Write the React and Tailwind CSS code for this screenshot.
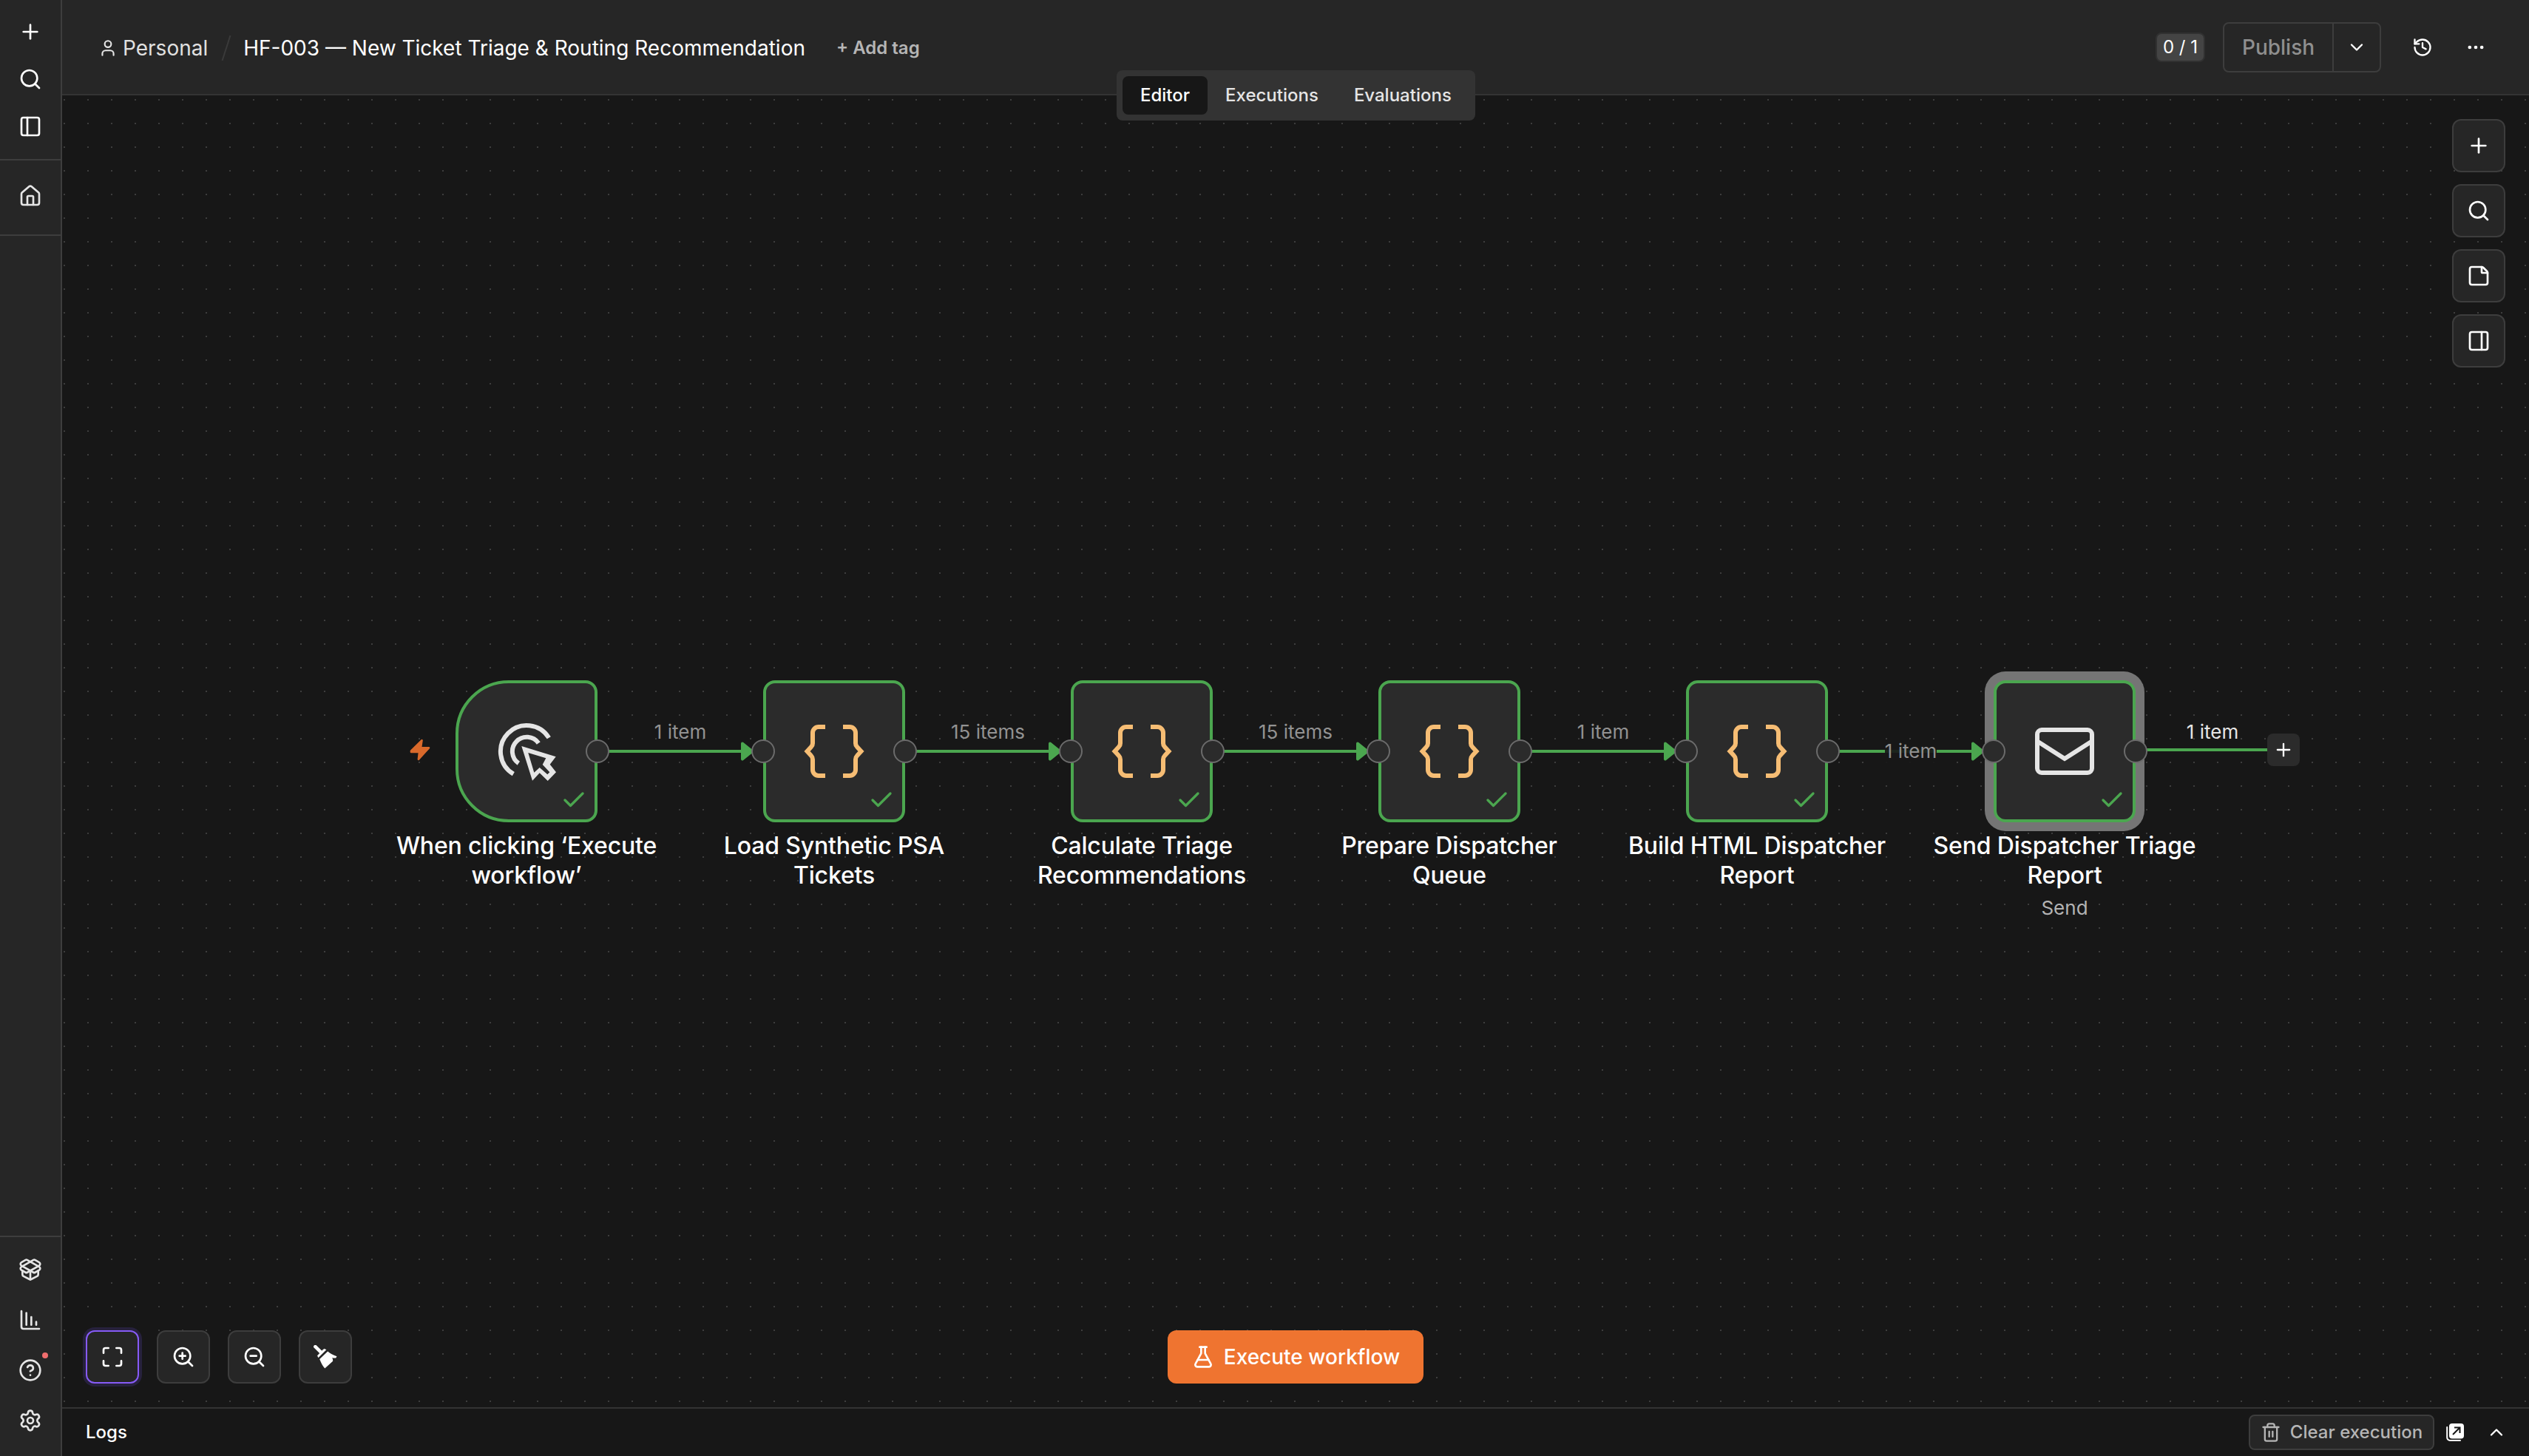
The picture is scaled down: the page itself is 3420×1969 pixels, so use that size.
import {
  ChartColumnDecreasing,
  Check,
  ChevronDown,
  ChevronUp,
  CircleQuestionMark,
  Ellipsis,
  FlaskConical,
  History,
  House,
  Maximize,
  PackageOpen,
  PanelLeft,
  PanelRight,
  Plus,
  Search,
  Settings,
  StickyNote,
  Trash2,
  User,
  ZoomIn,
  ZoomOut,
} from 'lucide-react'

const NODE_SIZE = 192
const NODE_PITCH = 416
const FIRST_X = 532
const NODE_Y = 791

const NODES = [
  { title: ['When clicking ‘Execute', 'workflow’'], icon: 'trigger' },
  { title: ['Load Synthetic PSA', 'Tickets'], icon: 'code' },
  { title: ['Calculate Triage', 'Recommendations'], icon: 'code' },
  { title: ['Prepare Dispatcher', 'Queue'], icon: 'code' },
  { title: ['Build HTML Dispatcher', 'Report'], icon: 'code' },
  { title: ['Send Dispatcher Triage', 'Report'], icon: 'mail', subtitle: 'Send', selected: true },
]

const EDGES = [
  { label: '1 item' },
  { label: '15 items' },
  { label: '15 items' },
  { label: '1 item' },
  { label: '1 item', inline: true },
]

function BroomIcon() {
  return (
    <svg width="32" height="32" viewBox="0 0 32 32" fill="currentColor">
      <path d="M2.4 2.2 9.5 9.2" stroke="currentColor" strokeWidth="4.6" strokeLinecap="round" />
      <path d="M5.6 14.2 13.4 6a1.5 1.5 0 0 1 2-.2l1.4.6L6.6 16.6z" stroke="currentColor" strokeLinejoin="round" />
      <path d="M8.2 19 19.2 8.6c3.2 2.6 7 5.2 12.3 6.6l-1.3 2.2c-2 .5-3.6 0-5-.5.8 1.8 1.2 3.4.9 4.8L15.3 31.5C12.5 28.3 10 24 8.2 19z" />
    </svg>
  )
}

function PopOutIcon() {
  return (
    <svg width="24" height="24" viewBox="0 0 24 24" fill="none">
      <path d="M1.2 5v14a4 4 0 0 0 4 4H19" stroke="white" strokeWidth="2" strokeLinecap="round" />
      <rect x="4" width="20" height="20.5" rx="4" fill="white" />
      <path d="M9 15 18 6M11 5.5h7.5V13" stroke="#171717" strokeWidth="2" />
    </svg>
  )
}

function BoltIcon() {
  return (
    <svg width="30" height="32" viewBox="0 0 30 32" fill="#d9692b" stroke="#d9692b" strokeWidth="2.6" strokeLinejoin="round">
      <path d="M17.5 3.2 16 13.3h11L12.9 28.8 14 19H3v-1.5z" />
    </svg>
  )
}

function TriggerIcon() {
  return (
    <svg className="overflow-visible" width="80" height="80" viewBox="0 0 80 80" fill="none">
      <path d="M70.3 21.8A35.3 35.3 0 1 0 22.3 70.7" stroke="#e5e5e5" strokeWidth="6" />
      <path d="M56.3 29A19.5 19.5 0 1 0 29.3 56.3" stroke="#e5e5e5" strokeWidth="6" />
      <path
        d="M33.3 33 79.7 47.3 71.7 57.7 80 68.3 68.7 80 57.7 69.3 48 79.7ZM42.3 42 50.3 68.7 57.7 62 68.3 71.3 71.3 68.3 61.7 58 66.3 49.3Z"
        fill="#e5e5e5"
        fillRule="evenodd"
      />
    </svg>
  )
}

function CodeIcon() {
  return (
    <svg className="overflow-visible" width="80" height="80" viewBox="0 0 80 80" fill="none" stroke="#f6bd74" strokeWidth="6">
      <path d="M28 7H19a8 8 0 0 0-8 8V29a7 7 0 0 1-2 5L3.5 40 9 46a7 7 0 0 1 2 5V65a8 8 0 0 0 8 8h9" />
      <path d="M52 7H61a8 8 0 0 1 8 8V29a7 7 0 0 0 2 5L76.5 40 71 46a7 7 0 0 0-2 5V65a8 8 0 0 1-8 8h-9" />
    </svg>
  )
}

function MailIcon() {
  return (
    <svg width="80" height="80" viewBox="0 0 80 80" fill="none" stroke="#e5e5e5" strokeWidth="6">
      <rect x="3" y="11" width="74" height="58" rx="6" />
      <path d="M4 27 40 50 76 27" />
    </svg>
  )
}

const NODE_ICONS = { trigger: TriggerIcon, code: CodeIcon, mail: MailIcon }

function Handle({ side }) {
  return (
    <div
      className={`absolute top-[76px] size-8 rounded-full border-2 border-[#6b6b6b] bg-[#2b2b2b] ${
        side === 'left' ? '-left-5' : '-right-5'
      }`}
    />
  )
}

function WorkflowNode({ node, index }) {
  const Icon = NODE_ICONS[node.icon]
  const isTrigger = node.icon === 'trigger'

  return (
    <div className="absolute w-48" style={{ left: FIRST_X + index * NODE_PITCH, top: NODE_Y }}>
      <div
        className={`relative flex size-48 items-center justify-center border-4 border-[#4ba64f] bg-[#2b2b2b] ${
          isTrigger ? 'rounded-l-[72px] rounded-r-[16px]' : 'rounded-[16px]'
        } ${node.selected ? 'shadow-[0_0_0_12px_#757575]' : ''}`}
      >
        <Icon />
        <Check className="absolute top-[140px] left-[138px] text-[#4ba64f]" size={36} strokeWidth={2.2} />
        {!isTrigger && <Handle side="left" />}
        <Handle side="right" />
      </div>
      <div className="mt-3 -ml-24 w-96 text-center text-[32px] leading-10 font-medium tracking-[-0.005em] text-white">
        {node.title.map((line) => (
          <p key={line}>{line}</p>
        ))}
        {node.subtitle && (
          <p className="mt-1 text-[26px] font-normal tracking-normal text-[#b3b3b3]">{node.subtitle}</p>
        )}
      </div>
      {isTrigger && (
        <div className="absolute top-[78px] -left-[63px]">
          <BoltIcon />
        </div>
      )}
    </div>
  )
}

function Edge({ edge, index }) {
  return (
    <div
      className="absolute flex h-8 w-[224px] items-center justify-center"
      style={{ left: FIRST_X + NODE_SIZE + index * NODE_PITCH, top: NODE_Y + 80 }}
    >
      <svg className="absolute inset-0" width="224" height="32" viewBox="0 0 224 32">
        <path d="M8 16h190" stroke="#4ba64f" strokeWidth="4" />
        <path d="M196 5.5 209 16 196 26.5z" fill="#4ba64f" stroke="#4ba64f" strokeWidth="4" strokeLinejoin="round" />
      </svg>
      <span
        className={`relative text-[26px] leading-8 text-[#929292] ${
          edge.inline ? 'bg-[#171717]/90' : '-top-[26px]'
        }`}
      >
        {edge.label}
      </span>
    </div>
  )
}

function ToolButton({ children, active }) {
  return (
    <button
      className={`flex size-[72px] items-center justify-center rounded-xl border-2 bg-[#262626] text-white ${
        active ? 'border-[#875bf7] shadow-[0_0_0_4px_#27213d]' : 'border-[#3d3d3d]'
      }`}
    >
      {children}
    </button>
  )
}

function Sidebar() {
  return (
    <aside className="flex w-[84px] shrink-0 flex-col border-r-2 border-[#3d3d3d] bg-[#262626] text-[#e5e5e5]">
      <div className="flex h-[217px] flex-col items-center gap-8 border-b-2 border-[#3d3d3d] pt-[27px] text-white">
        <Plus size={32} />
        <Search size={32} />
        <PanelLeft size={32} />
      </div>
      <div className="flex h-[102px] justify-center border-b-2 border-[#3d3d3d] pt-8">
        <House size={32} />
      </div>
      <div className="mt-auto flex h-[298px] flex-col items-center gap-9 border-t-2 border-[#3d3d3d] pt-[28px]">
        <PackageOpen size={32} />
        <ChartColumnDecreasing size={32} />
        <div className="relative">
          <CircleQuestionMark size={32} />
          <span className="absolute -top-2 -right-2 size-2 rounded-full bg-[#f06e6e]" />
        </div>
        <Settings size={32} />
      </div>
    </aside>
  )
}

function Header() {
  return (
    <header className="relative z-10 flex h-[129px] shrink-0 items-center justify-between border-b-2 border-[#333333] bg-[#262626] pr-[58px] pl-[49px]">
      <div className="flex items-center pt-0.5">
        <User className="text-[#e5e5e5]" size={26} />
        <span className="ml-[7px] text-[28px] text-[#e0e0e0]">Personal</span>
        <svg className="ml-[18px]" width="14" height="36" viewBox="0 0 14 36">
          <path d="M12.5 1 1.5 35" stroke="#3a3a3a" strokeWidth="2" />
        </svg>
        <span className="ml-4 text-[28px] text-white">HF-003 — New Ticket Triage &amp; Routing Recommendation</span>
        <button className="ml-[42px] text-[24px] font-semibold text-[#b5b5b5]">+ Add tag</button>
      </div>

      <div className="flex items-center text-white">
        <span className="mr-6 flex h-10 w-[67px] items-center justify-center rounded-lg border-2 border-[#313131] bg-[#444444] text-[24px]">
          0 / 1
        </span>
        <div className="mr-[42px] flex h-[68px] w-[214px] rounded-lg border-2 border-[#3d3d3d]">
          <button className="flex w-[148px] items-center justify-center border-r-2 border-[#3d3d3d] text-[28px] font-medium text-[#8f8f8f]">
            Publish
          </button>
          <button className="flex flex-1 items-center justify-center">
            <ChevronDown size={28} />
          </button>
        </div>
        <History className="mr-11" size={28} />
        <Ellipsis size={28} />
      </div>

      <nav className="absolute top-[95px] left-[1426px] flex h-[68px] w-[485px] items-center rounded-lg bg-[#333333] pl-2 text-[24px] font-medium text-[#e5e5e5]">
        <button className="h-[52px] rounded-lg bg-[#171717] px-6 text-white">Editor</button>
        <button className="h-[52px] px-6">Executions</button>
        <button className="h-[52px] px-6">Evaluations</button>
      </nav>
    </header>
  )
}

function Canvas() {
  return (
    <main className="relative flex-1 overflow-hidden bg-[#171717]">
      <svg className="absolute inset-0 size-full">
        <pattern id="dots" width="32" height="32" x="2" y="5" patternUnits="userSpaceOnUse">
          <rect width="2" height="2" fill="#3d3d3d" />
        </pattern>
        <rect width="100%" height="100%" fill="url(#dots)" />
      </svg>

      {/* Output stub of the last node */}
      <div className="absolute top-[863px] left-[2812px] flex h-11 items-center">
        <div className="h-1 w-[170px] bg-[#4ba64f]" />
        <div className="flex size-11 items-center justify-center rounded-lg bg-[#2b2b2b] text-white">
          <Plus size={28} />
        </div>
        <span className="absolute -top-[18px] left-0 w-[192px] text-center text-[26px] leading-8 text-[#e5e5e5]">1 item</span>
      </div>

      {EDGES.map((edge, i) => (
        <Edge key={i} edge={edge} index={i} />
      ))}
      {NODES.map((node, i) => (
        <WorkflowNode key={i} node={node} index={i} />
      ))}

      <div className="absolute top-8 right-8 flex flex-col gap-4">
        <ToolButton><Plus size={32} /></ToolButton>
        <ToolButton><Search size={32} /></ToolButton>
        <ToolButton><StickyNote size={32} /></ToolButton>
        <ToolButton><PanelRight size={32} /></ToolButton>
      </div>

      <div className="absolute bottom-8 left-8 flex gap-6">
        <ToolButton active><Maximize size={32} /></ToolButton>
        <ToolButton><ZoomIn size={32} /></ToolButton>
        <ToolButton><ZoomOut size={32} /></ToolButton>
        <ToolButton><BroomIcon /></ToolButton>
      </div>

      <button className="absolute bottom-8 left-[1495px] flex h-[72px] w-[346px] items-center justify-center gap-3 rounded-xl bg-[#ef7430] text-[28px] font-medium text-white">
        <FlaskConical size={32} />
        Execute workflow
      </button>
    </main>
  )
}

function LogsBar() {
  return (
    <footer className="flex h-[66px] shrink-0 items-center justify-between border-t-2 border-[#333333] bg-[#171717] pr-[30px] pl-8 text-[24px] font-medium text-white">
      <span>Logs</span>
      <div className="flex items-center">
        <button className="flex h-12 w-[251px] items-center justify-center gap-3 rounded-lg border-2 border-[#3d3d3d] bg-[#262626] text-[#b5b5b5]">
          <Trash2 size={28} />
          Clear execution
        </button>
        <div className="ml-4">
          <PopOutIcon />
        </div>
        <ChevronUp className="ml-[30px]" size={28} />
      </div>
    </footer>
  )
}

export default function App() {
  return (
    <div className="flex h-[1969px] w-[3420px] overflow-hidden bg-[#171717] font-['Inter',sans-serif]">
      <Sidebar />
      <div className="flex min-w-0 flex-1 flex-col">
        <Header />
        <Canvas />
        <LogsBar />
      </div>
    </div>
  )
}
